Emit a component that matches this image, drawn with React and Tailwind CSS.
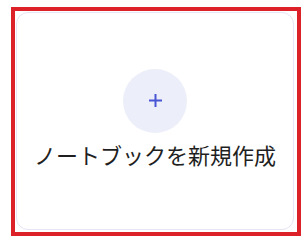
export default function App() {
  return (
    <div className="w-[307px] h-[241px] bg-white pt-[7px] pl-[11px]">
      <div className="w-[290px] h-[229px] border-4 border-[#dc2228] pt-px pl-px pr-[3px] pb-[2px]">
        <button
          type="button"
          className="w-full h-full flex flex-col items-center justify-center rounded-xl border border-[#e6e4f5] bg-white"
          style={{ fontFamily: '"Noto Sans CJK JP", "Noto Sans", sans-serif' }}
        >
          <div className="w-16 h-16 rounded-full bg-[#eceef9] flex items-center justify-center mt-[-6px]">
            <svg width="15" height="15" viewBox="0 0 15 15" fill="none">
              <path d="M7.5 1v13M1 7.5h13" stroke="#4855d4" strokeWidth="2" />
            </svg>
          </div>
          <span className="mt-[7px] text-[22px] leading-7 text-[#1f1f1f]">ノートブックを新規作成</span>
        </button>
      </div>
    </div>
  )
}
